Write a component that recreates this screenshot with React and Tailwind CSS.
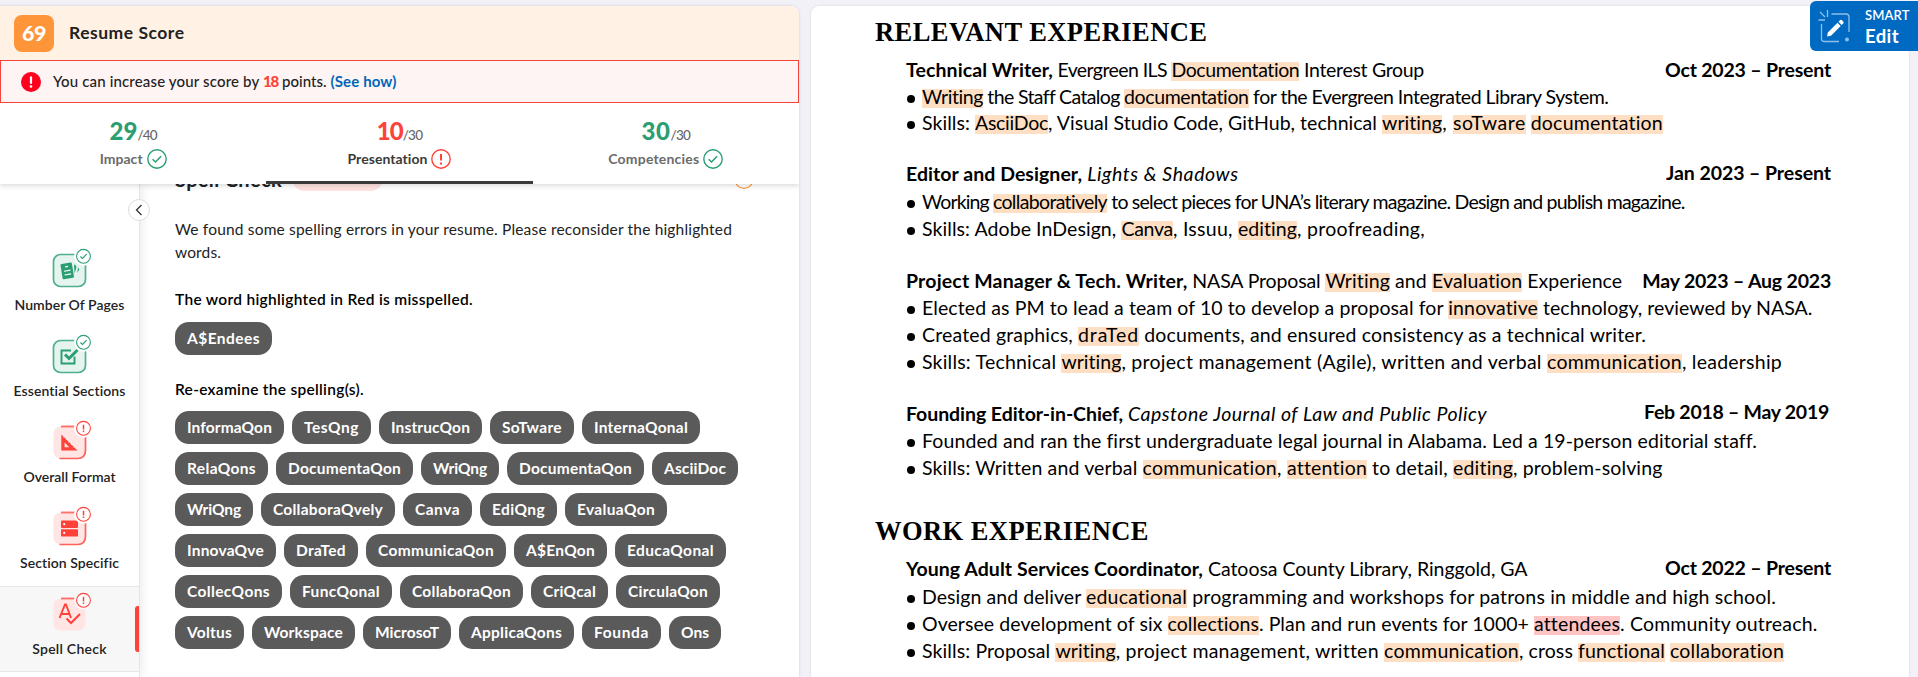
import { useLayoutEffect, useRef, useState } from "react";

/* Text set to an exact width by adjusting its tracking. */
function Fit({ w, className = "", children }) {
  const ref = useRef(null);
  const [ls, setLs] = useState(0);
  useLayoutEffect(() => {
    const el = ref.current;
    el.style.letterSpacing = "0px";
    const natural = el.getBoundingClientRect().width;
    const next = (w - natural) / el.textContent.length;
    el.style.letterSpacing = next + "px";
    setLs(next);
  }, [w, children]);
  return (
    <span className={"block shrink-0 whitespace-pre " + className} style={{ width: w }}>
      <span ref={ref} className="inline-block [font-variant-ligatures:none]" style={{ letterSpacing: ls }}>
        {children}
      </span>
    </span>
  );
}

const CheckCircle = ({ className }) => (
  <svg viewBox="0 0 20 20" className={className} fill="none" stroke="currentColor">
    <circle cx="10" cy="10" r="9.2" fill="#fff" strokeWidth="1.4" />
    <path d="M5.6 10.2l2.9 2.8 5.6-5.8" strokeWidth="1.5" />
  </svg>
);

const AlertCircle = ({ className }) => (
  <svg viewBox="0 0 20 20" className={className} fill="none" stroke="currentColor">
    <circle cx="10" cy="10" r="9.2" fill="#fff" strokeWidth="1.4" />
    <path d="M10 5v6.6M10 13.4v2.1" strokeWidth="2" />
  </svg>
);

function Tab({ score, sw, total, label, lw, ok, active }) {
  return (
    <div className={"flex flex-1 flex-col items-center border-b-[3px] pt-[14px] " + (active ? "border-[#3a3a3a]" : "border-transparent")}>
      <div className="flex h-[28px] items-baseline leading-[28px]">
        <Fit w={sw} className={"text-[24px] font-black " + (ok ? "text-[#2b9e72]" : "text-[#ff4239]")}>{score}</Fit>
        <Fit w={19.5} className="text-[13.5px] font-medium text-[#666]">{total}</Fit>
      </div>
      <div className="mt-[4px] flex h-[20px] items-center gap-1">
        <Fit w={lw} className={"pb-[2px] text-[14px] font-bold leading-[17px] " + (active ? "text-[#3a3a3a]" : "text-[#6b6b6b]")}>{label}</Fit>
        {ok ? <CheckCircle className="h-5 w-5 text-[#2b9e72]" /> : <AlertCircle className="h-5 w-5 text-[#ff4239]" />}
      </div>
    </div>
  );
}

const glyphs = {
  pages: (
    <g>
      <g transform="rotate(-9 16 18)">
        <rect x="9.5" y="10" width="11.5" height="15.5" rx="1.2" fill="#2b9e72" />
        <path d="M13.8 13.4h3M12 17.6h6.6M12 21.4h6.6" stroke="#fff" strokeWidth="1.2" />
      </g>
      <path d="M22 11.5q3 1 2.2 3.6l-1.6 5.4z" fill="#2b9e72" />
      <path d="M26 14.5l1.3 1.8-2 3.7z" fill="#2b9e72" />
    </g>
  ),
  check: (
    <g fill="none" stroke="#2b9e72" strokeWidth="1.9">
      <path d="M19 11.5H9.5v13h13V17.5" />
      <path d="M13 15.5l4 4 8.5-8.5" strokeWidth="3" />
    </g>
  ),
  ruler: (
    <g>
      <path fillRule="evenodd" fill="#ff4239" d="M9.3 9.5L25.5 25.5H9.3zM12.6 17.5v4.7h4.7z" />
      <path d="M12.5 11.5l-1 1M15 14l-1 1M17.5 16.5l-1 1M20 19l-1 1M22.5 21.5l-1 1" stroke="#ffe5e3" strokeWidth="1" />
    </g>
  ),
  server: (
    <g>
      <rect x="9" y="9.5" width="17" height="7.4" rx=".8" fill="#ff4239" />
      <rect x="9" y="18.2" width="17" height="7.4" rx=".8" fill="#ff4239" />
      <circle cx="12.2" cy="13.2" r="1.1" fill="#fff" />
      <circle cx="12.2" cy="21.9" r="1.1" fill="#fff" />
    </g>
  ),
  spell: (
    <g fill="none" stroke="#ff4239">
      <path d="M7.5 21L13 7.5h1L19 21M9.5 17h8" strokeWidth="1.9" />
      <path d="M14.5 21.5l4.5 4.5 9-9" strokeWidth="2" />
    </g>
  ),
};

function SideIcon({ kind, ok, partial }) {
  return (
    <svg viewBox="0 0 44 44" className="ml-[9px] block h-[44px] w-[44px] shrink-0" fill="none">
      <g transform="translate(0 5)">
        {ok ? (
          <rect x="1.5" y="1.5" width="32" height="32" rx="7" fill="#e5f4ee" stroke="#4fb08b" strokeWidth="1.7" />
        ) : (
          <g>
            <rect x="1.5" y="1.5" width="32" height="32" rx="7" fill="#ffe5e3" />
            <path d="M9 1.5h14" stroke="#ff7068" strokeWidth="1.9" />
            {!partial && <path d="M33.5 12v13q0 8.5-8 8.5H7.5" stroke="#ff6058" strokeWidth="1.7" />}
          </g>
        )}
        {glyphs[kind]}
      </g>
      <circle cx="31.5" cy="8.3" r="9.5" fill={partial ? "#f7f7f7" : "#fff"} />
      <g stroke={ok ? "#2b9e72" : "#ff4239"} transform="translate(.5 0)">
        <circle cx="31" cy="8.3" r="6.9" strokeWidth="1.1" fill="#fff" />
        {ok ? <path d="M27.9 8.5l2.1 2 4.1-4.3" strokeWidth="1.2" /> : <path d="M31 4.8v4.6M31 10.5v1.5" strokeWidth="1.5" />}
      </g>
    </svg>
  );
}

const sideItems = [
  ["pages", "Number Of Pages", 110, true],
  ["check", "Essential Sections", 112, true],
  ["ruler", "Overall Format", 92, false],
  ["server", "Section Specific", 99, false],
  ["spell", "Spell Check", 74.5, false],
];

const pillRows = [
  [["InformaQon", 109], ["TesQng", 79], ["InstrucQon", 103], ["SoTware", 84], ["InternaQonal", 118]],
  [["RelaQons", 93], ["DocumentaQon", 137], ["WriQng", 78], ["DocumentaQon", 137], ["AsciiDoc", 86]],
  [["WriQng", 78], ["CollaboraQvely", 134], ["Canva", 69], ["EdiQng", 77], ["EvaluaQon", 102]],
  [["InnovaQve", 101], ["DraTed", 74], ["CommunicaQon", 140], ["A$EnQon", 93], ["EducaQonal", 111]],
  [["CollecQons", 107], ["FuncQonal", 102], ["CollaboraQon", 123], ["CriQcal", 77], ["CirculaQon", 104]],
  [["Voltus", 69], ["Workspace", 103], ["MicrosoT", 88], ["ApplicaQons", 115], ["Founda", 79], ["Ons", 52]],
];

const Pill = ({ text, w }) => (
  <div className="flex h-[33px] shrink-0 justify-center rounded-[14px] bg-[#5a5a5a] px-3 text-[15.5px] font-bold leading-[32px] text-white">
    <Fit w={w - 24}>{text}</Fit>
  </div>
);

/* Segments: [text, right edge, style]; h = highlight, r = red highlight, b = bold, i = italic. */
const jobs1 = [
  { mt: "mt-0", title: 1, date: ["Oct 2023 – Present", 1665, 1831], segs: [["Technical Writer,", 1053, "b"], [" Evergreen ILS ", 1171.4], ["Documentation", 1299.3, "h"], [" Interest Group", 1424]] },
  { mt: "mt-2", segs: [["Writing", 983, "h"], [" the Staff Catalog ", 1124], ["documentation", 1248.6, "h"], [" for the Evergreen Integrated Library System.", 1608.5]] },
  { mt: "mt-[7px]", segs: [["Skills: ", 975], ["AsciiDoc", 1048, "h"], [", Visual Studio Code, GitHub, technical ", 1382], ["writing", 1442.3, "h"], [", ", 1453], ["soTware", 1526, "h"], [" ", 1530.7], ["documentation", 1663, "h"]] },
  { mt: "mt-8", title: 1, shift: "-mt-px", date: ["Jan 2023 – Present", 1666, 1831], segs: [["Editor and Designer,", 1082, "b"], [" Lights & Shadows", 1238.6, "i"]] },
  { mt: "mt-[9px]", segs: [["Working ", 993], ["collaboratively", 1107, "h"], [" to select pieces for UNA’s literary magazine. Design and publish magazine.", 1684.5]] },
  { mt: "mt-2", segs: [["Skills: Adobe InDesign, ", 1121.4], ["Canva", 1173, "h"], [", Issuu, ", 1238], ["editing", 1297, "h"], [", proofreading,", 1425]] },
  { mt: "mt-[33px]", title: 1, date: ["May 2023 – Aug 2023", 1642.3, 1831], segs: [["Project Manager & Tech. Writer,", 1187.5, "b"], [" NASA Proposal ", 1325.4], ["Writing", 1390, "h"], [" and ", 1432], ["Evaluation", 1522.3, "h"], [" Experience", 1622]] },
  { mt: "mt-2", segs: [["Elected as PM to lead a team of 10 to develop a proposal for ", 1448.3], ["innovative", 1538, "h"], [" technology, reviewed by NASA.", 1812.5]] },
  { mt: "mt-2", segs: [["Created graphics, ", 1078], ["draTed", 1139, "h"], [" documents, and ensured consistency as a technical writer.", 1646]] },
  { mt: "mt-2", segs: [["Skills: Technical ", 1061.4], ["writing", 1121.4, "h"], [", project management (Agile), written and verbal ", 1547], ["communication", 1682, "h"], [", leadership", 1782]] },
  { mt: "mt-[33px]", title: 1, shift: "-mt-[2px] mr-[2px]", date: ["Feb 2018 – May 2019", 1644, 1829], segs: [["Founding Editor-in-Chief,", 1123, "b"], [" Capstone Journal of Law and Public Policy", 1487, "i"]] },
  { mt: "mt-2", segs: [["Founded and ran the first undergraduate legal journal in Alabama. Led a 19-person editorial staff.", 1757]] },
  { mt: "mt-2", segs: [["Skills: Written and verbal ", 1142.5], ["communication", 1277, "h"], [", ", 1287], ["attention", 1367, "h"], [" to detail, ", 1453], ["editing", 1513, "h"], [", problem-solving", 1662.5]] },
];
const jobs2 = [
  { mt: "mt-0", title: 1, shift: "-mt-px", date: ["Oct 2022 – Present", 1665, 1831], segs: [["Young Adult Services Coordinator,", 1203, "b"], [" Catoosa County Library, Ringgold, GA", 1527.5]] },
  { mt: "mt-[9px]", segs: [["Design and deliver ", 1086], ["educational", 1187, "h"], [" programming and workshops for patrons in middle and high school.", 1776]] },
  { mt: "mt-2", segs: [["Oversee development of six ", 1167.5], ["collections", 1259, "h"], [". Plan and run events for 1000+ ", 1534], ["attendees", 1620, "r"], [". Community outreach.", 1817.5]] },
  { mt: "mt-2", segs: [["Skills: Proposal ", 1055.4], ["writing", 1115.7, "h"], [", project management, written ", 1384], ["communication", 1519, "h"], [", cross ", 1578], ["functional", 1665, "h"], [" ", 1670], ["collaboration", 1784, "h"]] },
];

const segStyle = { h: "bg-[#ffdfc3]", r: "bg-[#ffc5c5]", b: "font-bold", i: "italic" };

function Line({ line }) {
  let x = line.title ? 906 : 922;
  return (
    <div className={"flex h-[19px] items-start text-[19.5px] leading-[16px] " + line.mt}>
      {!line.title && (
        <span className="flex h-[19px] w-[16px] shrink-0 items-center pl-px">
          <span className="block h-[8px] w-[8px] rounded-full bg-black" />
        </span>
      )}
      {line.segs.map(([t, end, k], i) => {
        const w = end - x;
        x = end;
        return <Fit key={i} w={w} className={"h-[19px] " + (segStyle[k] || "")}>{t}</Fit>;
      })}
      {line.date && (
        <div className="ml-auto flex h-[19px] w-0 shrink-0 justify-end">
          <Fit w={line.date[2] - line.date[1]} className={"font-bold " + (line.shift || "")}>{line.date[0]}</Fit>
        </div>
      )}
    </div>
  );
}

export default function App() {
  return (
    <div className="flex h-[677px] w-[1918px] gap-[12px] overflow-hidden bg-[#f1f1f7] pt-[6px] font-['Lato',sans-serif] text-black">
      <section className="relative flex h-[671px] w-[799px] shrink-0 flex-col overflow-hidden rounded-tr-[8px] bg-white shadow-[0_0_3px_rgba(0,0,0,0.15)]">
        <div className="relative z-10 h-[178px] shrink-0 bg-white shadow-[0_2px_5px_rgba(0,0,0,0.14)]">
          <header className="flex h-[54px] items-center bg-[#fff1e3] pl-[14px]">
            <div className="flex h-[37px] w-[40px] justify-center rounded-[8px] bg-[#ff9539] text-[21.5px] font-black leading-[36px] text-white">
              <Fit w={24}>69</Fit>
            </div>
            <Fit w={115.5} className="ml-[15px] text-[17.5px] font-bold leading-[24px] text-[#222]">Resume Score</Fit>
          </header>
          <div className="flex h-[43px] items-center border border-[#f8423b] bg-[#fff4f4] pl-[20px] text-[15px] font-medium text-[#222]">
            <svg viewBox="0 0 20 20" className="h-5 w-5 shrink-0">
              <circle cx="10" cy="10" r="10" fill="#ff001f" />
              <path d="M10 5.3v5.7" stroke="#fff" strokeWidth="2.2" strokeLinecap="round" />
              <circle cx="10" cy="14.5" r="1.3" fill="#fff" />
            </svg>
            <Fit w={210} className="ml-[12px]">{"You can increase your score by "}</Fit>
            <Fit w={15} className="font-black text-[#ff4239]">18</Fit>
            <Fit w={48.5} className="ml-[4px]">{"points. "}</Fit>
            <Fit w={66} className="font-bold text-[#0067b8]">(See how)</Fit>
          </div>
          <div className="flex h-[81px]">
            <Tab score="29" sw={28} total="/40" label="Impact" lw={43} ok />
            <Tab score="10" sw={26} total="/30" label="Presentation" lw={80} active />
            <Tab score="30" sw={29} total="/30" label="Competencies" lw={91} ok />
          </div>
        </div>

        <div className="flex h-[493px]">
          <aside className="relative w-[140px] shrink-0 border-r border-[#e6e6e6] pt-[58px] shadow-[2px_0_10px_rgba(0,0,0,0.08)]">
            {sideItems.map(([kind, label, w, ok]) => (
              <div key={kind} className={"flex h-[86px] flex-col items-center border-y " + (kind === "spell" ? "border-[#e6e6e6] bg-[#f7f7f7]" : "border-transparent")}>
                <div className="h-[5px] shrink-0" />
                <SideIcon kind={kind} ok={ok} partial={kind === "spell"} />
                <Fit w={w} className="mt-[3px] text-[14px] font-semibold leading-[20px] text-[#222]">{label}</Fit>
              </div>
            ))}
            <div className="absolute right-0 bottom-[25px] h-[46px] w-[4px] rounded-l-[3px] bg-[#ff4239]" />
            <div className="absolute top-[15px] -right-[11px] flex h-[22px] w-[22px] items-center justify-center rounded-full border border-[#dedede] bg-white">
              <svg viewBox="0 0 10 12" className="h-[12px] w-[10px]" fill="none" stroke="#333" strokeWidth="1.3">
                <path d="M7.5 1L2.5 6l5 5" />
              </svg>
            </div>
          </aside>

          <main className="flex flex-1 flex-col pl-[35px]">
            <div className="-mt-[18px] flex h-[25px] shrink-0 items-center">
              <Fit w={107} className="text-[20px] font-bold leading-[24px] text-[#222]">Spell Check</Fit>
              <div className="ml-[10px] h-[25px] w-[91px] rounded-full bg-[#ffe3e0]" />
              <svg viewBox="0 0 20 20" className="mr-[45px] ml-auto h-5 w-5" fill="none" stroke="#ff9539">
                <circle cx="10" cy="10" r="9.3" strokeWidth="1.2" />
                <path d="M7.3 8q0-2.7 2.7-2.7T12.7 8q0 1.5-2.7 2.7v1M10 13v1.8" strokeWidth="1.5" />
              </svg>
            </div>
            <div className="mt-[27px] text-[15.5px] leading-[23px] text-[#222]">
              <Fit w={557}>We found some spelling errors in your resume. Please reconsider the highlighted</Fit>
              <Fit w={46}>words.</Fit>
            </div>
            <Fit w={298} className="mt-[24px] text-[15.5px] font-semibold leading-[23px]">The word highlighted in Red is misspelled.</Fit>
            <div className="mt-[11px] flex"><Pill text="A$Endees" w={97} /></div>
            <Fit w={189} className="mt-[23px] text-[15.5px] font-semibold leading-[23px]">Re-examine the spelling(s).</Fit>
            <div className="mt-[10px] flex flex-col gap-[8px]">
              {pillRows.map((row, i) => (
                <div key={i} className="flex gap-[8px]">
                  {row.map(([t, w], j) => <Pill key={j} text={t} w={w} />)}
                </div>
              ))}
            </div>
            <Fit w={117} className="mt-[22px] ml-[473px] text-[15.5px] font-semibold leading-[23px] text-[#0067b8]">Add to Dictionary</Fit>
          </main>
        </div>
      </section>

      <section className="h-[671px] w-[1098px] shrink-0 rounded-t-[8px] bg-white pr-[78px] pl-[95px] shadow-[0_0_2px_rgba(0,0,0,0.15)]">
        <Fit w={332.5} className="-ml-[31px] h-[56px] pt-[11px] font-['Liberation_Serif',serif] text-[26.5px] font-bold leading-[30px]">RELEVANT EXPERIENCE</Fit>
        {jobs1.map((l, i) => <Line key={i} line={l} />)}
        <Fit w={274} className="-ml-[31px] h-[82px] pt-[37px] font-['Liberation_Serif',serif] text-[26.5px] font-bold leading-[30px]">WORK EXPERIENCE</Fit>
        {jobs2.map((l, i) => <Line key={i} line={l} />)}
      </section>

      <button className="absolute top-px left-[1810px] flex h-[50px] w-[108px] rounded-l-[6px] bg-[#006ac3] text-left text-white">
        <svg viewBox="0 0 34 34" className="mt-[8px] ml-[7px] h-[34px] w-[34px] shrink-0" fill="none" stroke="#8fc0ea" strokeWidth="1.3">
          <path d="M14.5 5H29q3 0 3 3v15M4.5 15v15q0 2.500 3 2.500H22" />
          <path d="M10.5 1v7M3 3l5 5M1.5 11h6.5" />
          <circle cx="30" cy="30.5" r="1.3" fill="#8fc0ea" />
          <path d="M10 27.5l.8-4L20.5 13.8l3.2 3.2L14 26.7zM21.5 12.8l1.7-1.7q.8-.6 1.6 0l1.6 1.6q.6.8 0 1.6l-1.7 1.7z" fill="#fff" stroke="none" />
        </svg>
        <span className="mt-[5px] ml-[14px] flex flex-col">
          <Fit w={44.5} className="h-[18px] text-[13px] font-semibold leading-[18px]">SMART</Fit>
          <Fit w={34} className="text-[18.5px] font-bold leading-[24px]">Edit</Fit>
        </span>
      </button>
    </div>
  );
}
